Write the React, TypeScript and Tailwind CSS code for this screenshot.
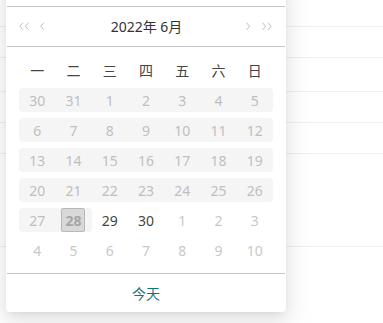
import React from 'react';

type Cell = { d: number; kind: 'off' | 'in' | 'next' | 'sel'; bg?: 'l' | 'm' | 'r' };

const weekNames = ['一', '二', '三', '四', '五', '六', '日'];

// 构造日历的 6 行
const buildRows = (): Cell[][] => {
  const rows: Cell[][] = [];
  const disabledRows = [
    [30, 31, 1, 2, 3, 4, 5],
    [6, 7, 8, 9, 10, 11, 12],
    [13, 14, 15, 16, 17, 18, 19],
    [20, 21, 22, 23, 24, 25, 26],
  ];
  disabledRows.forEach((r) => {
    rows.push(r.map((d, i) => ({ d, kind: 'off', bg: i === 0 ? 'l' : i === 6 ? 'r' : 'm' })));
  });
  rows.push([
    { d: 27, kind: 'off', bg: 'l' },
    { d: 28, kind: 'sel', bg: 'r' },
    { d: 29, kind: 'in' },
    { d: 30, kind: 'in' },
    { d: 1, kind: 'next' },
    { d: 2, kind: 'next' },
    { d: 3, kind: 'next' },
  ]);
  rows.push([4, 5, 6, 7, 8, 9, 10].map((d) => ({ d, kind: 'next' })));
  return rows;
};

const Chevron = ({ dir, double }: { dir: 'l' | 'r'; double?: boolean }) => {
  const one = dir === 'l' ? 'M4 0.5 L0.8 4 L4 7.5' : 'M0.5 0.5 L3.7 4 L0.5 7.5';
  return (
    <svg width={double ? 10 : 5} height={9} viewBox={double ? '0 0 10 8.5' : '0 0 5 8.5'} fill="none" stroke="#bdbdbd" strokeWidth="1">
      <path d={one} />
      {double && <path d={one} transform="translate(5.5 0)" />}
    </svg>
  );
};

const App = () => {
  const rows = buildRows();

  return (
    <div className="relative w-[383px] h-[323px] overflow-hidden bg-white" style={{ fontFamily: '"Noto Sans", "Noto Sans CJK SC", sans-serif' }}>
      {/* 背景里的列表 */}
      <div className="flex flex-col">
        <div className="h-[27px] border-b border-[#f0f0f0]" />
        <div className="h-[31px] border-b border-[#f0f0f0]" />
        <div className="h-[34px] border-b border-[#f0f0f0]" />
        <div className="h-[31px] border-b border-[#f0f0f0]" />
        <div className="h-[31px] border-b border-[#f0f0f0]" />
        <div className="h-[93px] border-b border-[#f0f0f0]" />
      </div>

      {/* 日期选择弹层 */}
      <div className="absolute left-[6px] top-[-19px] w-[280px] bg-white rounded-[4px] shadow-[0_3px_6px_-4px_rgba(0,0,0,0.12),0_6px_16px_0_rgba(0,0,0,0.08),0_9px_28px_8px_rgba(0,0,0,0.05)]">
        <div className="h-[26px] mx-px border-b border-[#c4c4c4]" />
        <div className="h-[40px] mx-px border-b border-[#c4c4c4] flex items-center px-[12px]">
          <div className="flex items-center gap-[11px]">
            <Chevron dir="l" double />
            <Chevron dir="l" />
          </div>
          <div className="flex-1 text-center text-[14px] text-[#333] pl-[2px]">2022年 6月</div>
          <div className="flex items-center gap-[11px] pr-[1px]">
            <Chevron dir="r" />
            <Chevron dir="r" double />
          </div>
        </div>

        <div className="px-[13px] pt-[11px] pb-[11px]">
          <div className="grid grid-cols-7 h-[24px] items-center text-center text-[14px] text-[#444] mb-[6px]">
            {weekNames.map((w) => (
              <div key={w}>{w}</div>
            ))}
          </div>
          <div className="flex flex-col gap-[6px]">
            {rows.map((r, ri) => (
              <div key={ri} className="grid grid-cols-7 h-[24px] text-[14px] text-center">
                {r.map((c, ci) => {
                  const bg = c.bg
                    ? c.bg === 'l'
                      ? 'bg-[#f5f5f5] rounded-l-[4px]'
                      : c.bg === 'r'
                        ? 'bg-[#f5f5f5] rounded-r-[4px]'
                        : 'bg-[#f5f5f5]'
                    : '';
                  const color =
                    c.kind === 'off' ? 'text-[#bfbfbf]' : c.kind === 'in' ? 'text-[#444]' : c.kind === 'next' ? 'text-[#c8c8c8]' : 'text-[#a6a6a6]';
                  return (
                    <div key={ci} className={`flex items-center justify-center ${bg} ${color}`}>
                      {c.kind === 'sel' ? (
                        <span className="w-[24px] h-[24px] flex items-center justify-center rounded-[2px] bg-[#d9d9d9] border border-[#b8b8b8] font-bold">
                          {c.d}
                        </span>
                      ) : (
                        c.d
                      )}
                    </div>
                  );
                })}
              </div>
            ))}
          </div>
        </div>

        <div className="mx-px border-t border-[#c4c4c4] h-[39px] flex items-center justify-center text-[14px] text-[#137478]">今天</div>
      </div>
    </div>
  );
};

export default App;
